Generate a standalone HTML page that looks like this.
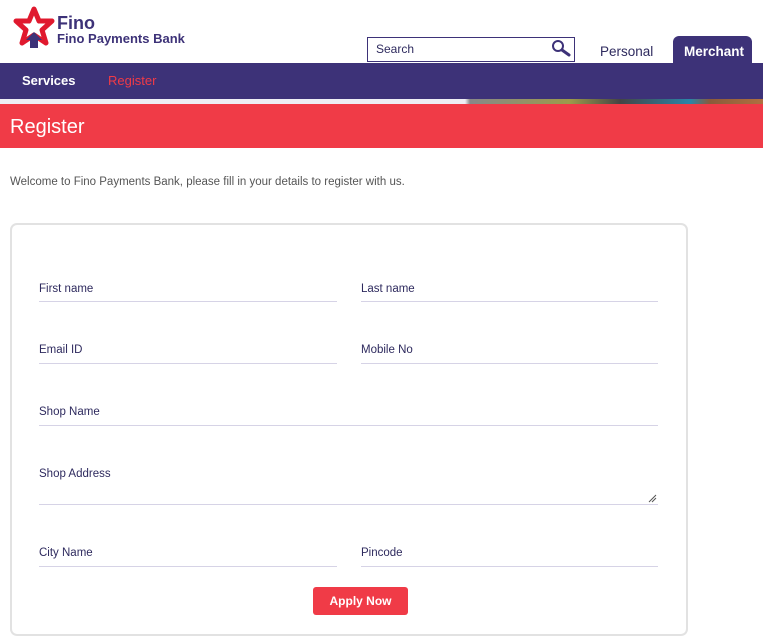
<!DOCTYPE html>
<html><head><meta charset="utf-8"><style>
*{margin:0;padding:0;box-sizing:border-box}
body{width:763px;height:641px;overflow:hidden;background:#fff;font-family:"Liberation Sans",Arial,sans-serif;position:relative}
.a{position:absolute}
.lbl{position:absolute;font-size:11.5px;color:#2e2a5e;line-height:14px}
.ln{position:absolute;height:1px;background:#d6d3e6}
</style></head><body>
<svg class="a" style="left:12px;top:6px" width="44" height="44" viewBox="0 0 44 44">
<path d="M22 3 L27 15 L40 15 L30 24 L34 37 L22 29 L10 37 L14 24 L4 15 L17 15 Z" fill="none" stroke="#e0192e" stroke-width="5" stroke-linejoin="round"/>
<path d="M22 26 L30 34 L26 34 L26 42 L18 42 L18 34 L14 34 Z" fill="#3d3278"/>
</svg>
<div class="a" style="left:57px;top:13px;font-size:18px;font-weight:bold;color:#3d3278;line-height:20px">Fino</div>
<div class="a" style="left:57px;top:31px;font-size:13px;font-weight:bold;color:#3d3278;line-height:15px">Fino Payments Bank</div>
<div class="a" style="left:367px;top:37px;width:208px;height:25px;border:1px solid #3d3278"></div>
<div class="a" style="left:376px;top:42px;font-size:12px;color:#2e2a5e">Search</div>
<svg class="a" style="left:551px;top:39px" width="20" height="18" viewBox="0 0 20 18"><circle cx="7" cy="7" r="5" fill="none" stroke="#3d3278" stroke-width="2"/><path d="M11 11 L18 16" stroke="#3d3278" stroke-width="3" stroke-linecap="round"/></svg>
<div class="a" style="left:600px;top:44px;font-size:13.5px;color:#2e2a5e">Personal</div>
<div class="a" style="left:673px;top:36px;width:79px;height:28px;background:#3d3278;border-radius:6px 6px 0 0"></div>
<div class="a" style="left:684px;top:44px;font-size:13.5px;font-weight:bold;color:#fff">Merchant</div>
<div class="a" style="left:0;top:63px;width:763px;height:36px;background:#3d3278"></div>
<div class="a" style="left:22px;top:73px;font-size:13px;font-weight:bold;color:#fff">Services</div>
<div class="a" style="left:108px;top:73px;font-size:13px;color:#f03b47">Register</div>
<div class="a" style="left:0;top:99px;width:763px;height:5px;background:linear-gradient(90deg,#eeeef4 0,#eeeef4 465px,#888 470px,#9c9a4a 570px,#444 620px,#2a85a8 690px,#8a5a3a 710px,#b07040 763px)"></div>
<div class="a" style="left:0;top:104px;width:763px;height:44px;background:#f03b47"></div>
<div class="a" style="left:10px;top:115px;font-size:20px;color:#fff;line-height:24px">Register</div>
<div class="a" style="left:10px;top:176px;font-size:11.5px;color:#555">Welcome to Fino Payments Bank, please fill in your details to register with us.</div>
<div class="a" style="left:10px;top:223px;width:678px;height:413px;border:2px solid #e2e2e2;border-radius:7px"></div>
<div class="lbl" style="left:39px;top:282px">First name</div><div class="ln" style="left:39px;top:301px;width:298px"></div>
<div class="lbl" style="left:361px;top:282px">Last name</div><div class="ln" style="left:361px;top:301px;width:297px"></div>
<div class="lbl" style="left:39px;top:343px">Email ID</div><div class="ln" style="left:39px;top:363px;width:298px"></div>
<div class="lbl" style="left:361px;top:343px">Mobile No</div><div class="ln" style="left:361px;top:363px;width:297px"></div>
<div class="lbl" style="left:39px;top:405px">Shop Name</div><div class="ln" style="left:39px;top:425px;width:619px"></div>
<div class="lbl" style="left:39px;top:467px">Shop Address</div><div class="ln" style="left:39px;top:504px;width:619px"></div>
<svg class="a" style="left:648px;top:494px" width="9" height="9"><path d="M1 8 L8 1 M4 8 L8 4" stroke="#555" stroke-width="1"/></svg>
<div class="lbl" style="left:39px;top:546px">City Name</div><div class="ln" style="left:39px;top:566px;width:298px"></div>
<div class="lbl" style="left:361px;top:546px">Pincode</div><div class="ln" style="left:361px;top:566px;width:297px"></div>
<div class="a" style="left:313px;top:587px;width:95px;height:28px;background:#f03b47;border-radius:3px;color:#fff;font-size:12px;font-weight:bold;text-align:center;line-height:28px">Apply Now</div>
</body></html>
